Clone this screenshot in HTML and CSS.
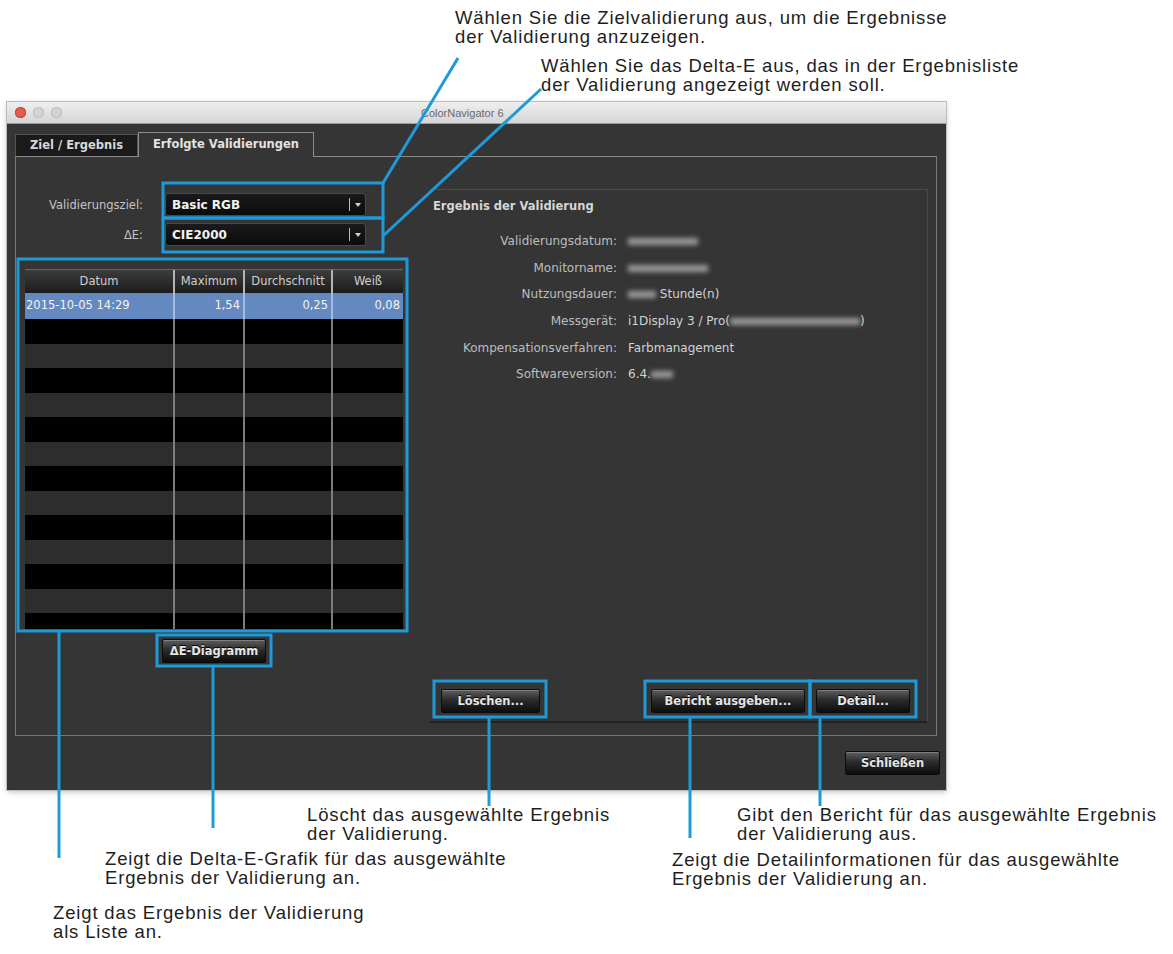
FILE: index.html
```html
<!DOCTYPE html>
<html lang="de">
<head>
  <meta charset="UTF-8">
  <title>ColorNavigator 6 – Erfolgte Validierungen</title>
  <link rel="stylesheet" href="styles.css">
</head>
<body>
<div class="sheet">

  <div class="window">
    <div class="titlebar">
      <span class="light red"></span>
      <span class="light"></span>
      <span class="light"></span>
      <span class="title">ColorNavigator 6</span>
    </div>

    <div class="win-body">
      <div class="tabs">
        <div class="tab">Ziel / Ergebnis</div>
        <div class="tab active">Erfolgte Validierungen</div>
      </div>

      <div class="panel">
        <div class="left">
          <div class="form">
            <label>Validierungsziel:</label>
            <div class="select"><span>Basic RGB</span><i></i></div>
            <label>ΔE:</label>
            <div class="select"><span>CIE2000</span><i></i></div>
          </div>

          <div class="grid">
            <div class="row head">
              <div>Datum</div><div>Maximum</div><div>Durchschnitt</div><div>Weiß</div>
            </div>
            <div class="row selected">
              <div class="date">2015-10-05 14:29</div><div>1,54</div><div>0,25</div><div>0,08</div>
            </div>
            <div class="row"><div></div><div></div><div></div><div></div></div>
            <div class="row"><div></div><div></div><div></div><div></div></div>
            <div class="row"><div></div><div></div><div></div><div></div></div>
            <div class="row"><div></div><div></div><div></div><div></div></div>
            <div class="row"><div></div><div></div><div></div><div></div></div>
            <div class="row"><div></div><div></div><div></div><div></div></div>
            <div class="row"><div></div><div></div><div></div><div></div></div>
            <div class="row"><div></div><div></div><div></div><div></div></div>
            <div class="row"><div></div><div></div><div></div><div></div></div>
            <div class="row"><div></div><div></div><div></div><div></div></div>
            <div class="row"><div></div><div></div><div></div><div></div></div>
            <div class="row"><div></div><div></div><div></div><div></div></div>
            <div class="row"><div></div><div></div><div></div><div></div></div>
          </div>

          <div class="diag-row">
            <button class="btn diag">ΔE-Diagramm</button>
          </div>
        </div>

        <div class="right">
          <div class="group">
            <h2>Ergebnis der Validierung</h2>
            <div class="info">
              <span class="key">Validierungsdatum:</span>
              <span class="val"><b class="hidden w70"></b></span>
              <span class="key">Monitorname:</span>
              <span class="val"><b class="hidden w80"></b></span>
              <span class="key">Nutzungsdauer:</span>
              <span class="val"><b class="hidden w28"></b> Stunde(n)</span>
              <span class="key">Messgerät:</span>
              <span class="val">i1Display 3 / Pro(<b class="hidden w130"></b>)</span>
              <span class="key">Kompensationsverfahren:</span>
              <span class="val">Farbmanagement</span>
              <span class="key">Softwareversion:</span>
              <span class="val">6.4.<b class="hidden w22"></b></span>
            </div>
            <div class="actions">
              <button class="btn delete">Löschen...</button>
              <span class="spacer"></span>
              <button class="btn report">Bericht ausgeben...</button>
              <button class="btn detail">Detail...</button>
            </div>
          </div>
        </div>
      </div>

      <div class="footer">
        <button class="btn close">Schließen</button>
      </div>
    </div>
  </div>

  <!-- callout frames and leader lines -->
  <svg class="callouts" width="1173" height="954" viewBox="0 0 1173 954">
    <g fill="none" stroke="#1d9ad7" stroke-width="3">
      <rect x="163" y="183" width="220" height="35"/>
      <rect x="163" y="218" width="220" height="34"/>
      <rect x="18" y="259" width="389" height="372"/>
      <rect x="157" y="635" width="114" height="31"/>
      <rect x="434" y="681" width="112" height="36"/>
      <rect x="645" y="681" width="165" height="36"/>
      <rect x="810" y="681" width="106" height="36"/>
      <path d="M458 58 L383 183"/>
      <path d="M541 89 L383 236"/>
      <path d="M59 631 V858"/>
      <path d="M213 666 V828"/>
      <path d="M489 717 V806"/>
      <path d="M690 717 V838"/>
      <path d="M820 717 V806"/>
    </g>
  </svg>

  <p class="note n-target">Wählen Sie die Zielvalidierung aus, um die Ergebnisse<br>der Validierung anzuzeigen.</p>
  <p class="note n-delta">Wählen Sie das Delta-E aus, das in der Ergebnisliste<br>der Validierung angezeigt werden soll.</p>
  <p class="note n-delete">Löscht das ausgewählte Ergebnis<br>der Validierung.</p>
  <p class="note n-report">Gibt den Bericht für das ausgewählte Ergebnis<br>der Validierung aus.</p>
  <p class="note n-diag">Zeigt die Delta-E-Grafik für das ausgewählte<br>Ergebnis der Validierung an.</p>
  <p class="note n-detail">Zeigt die Detailinformationen für das ausgewählte<br>Ergebnis der Validierung an.</p>
  <p class="note n-list">Zeigt das Ergebnis der Validierung<br>als Liste an.</p>

</div>
</body>
</html>
```

FILE: styles.css
```css
body {
  margin: 0;
  background: #fff;
  font-family: "DejaVu Sans", Verdana, sans-serif;
}

.sheet {
  position: relative;
  width: 1173px;
  height: 954px;
  overflow: hidden;
}

/* ---------- window ---------- */

.window {
  margin: 102px 0 0 7px;
  width: 939px;
  height: 688px;
  background: #353535;
  box-shadow: 0 0 0 1px #bdbdbd, 0 2px 6px rgba(0,0,0,0.25);
}

.titlebar {
  height: 21px;
  display: flex;
  align-items: center;
  gap: 7px;
  padding-left: 8px;
  background: linear-gradient(#efefef, #d5d5d5);
  border-bottom: 1px solid #9c9c9c;
}

.light {
  width: 11px;
  height: 11px;
  border-radius: 50%;
  background: #d4d4d4;
  box-shadow: inset 0 0 0 1px #bcbcbc;
}
.light.red {
  background: #e25c4f;
  box-shadow: inset 0 0 0 1px #c6463a;
}

.titlebar .title {
  margin-left: 352px;
  font-family: "Liberation Sans", Arial, sans-serif;
  font-size: 11px;
  color: #6a6a6a;
}

.win-body {
  padding: 8px 9px 0 8px;
}

/* ---------- tabs ---------- */

.tabs {
  display: flex;
  align-items: flex-end;
  height: 24px;
}

.tab {
  width: 123px;
  height: 22px;
  box-sizing: border-box;
  border: 1px solid #545454;
  border-bottom: none;
  background: #1a1a1a;
  color: #d8d8d8;
  font-size: 11.5px;
  font-weight: bold;
  line-height: 21px;
  text-align: center;
}

.tab.active {
  position: relative;
  z-index: 1;
  width: 176px;
  height: 25px;
  margin-bottom: -1px;
  border-color: #8c8c8c;
  background: #353535;
  color: #e2e2e2;
  line-height: 23px;
}

/* ---------- panel ---------- */

.panel {
  height: 580px;
  box-sizing: border-box;
  border: 1px solid #777;
  border-top-color: #8c8c8c;
  display: grid;
  grid-template-columns: 400px 1fr;
}

.left {
  padding-top: 36px;
}

.form {
  display: grid;
  grid-template-columns: 127px 201px;
  column-gap: 22px;
  row-gap: 7px;
  align-items: center;
}

.form label {
  text-align: right;
  font-size: 11.5px;
  color: #c4c4c4;
}

.select {
  height: 23px;
  box-sizing: border-box;
  border: 1px solid #4a4a4a;
  border-radius: 3px;
  background: linear-gradient(#1a1a1a, #0b0b0b);
  display: flex;
  align-items: center;
}
.select span {
  flex: 1;
  padding-left: 6px;
  font-size: 12px;
  font-weight: bold;
  color: #f2f2f2;
}
.select i {
  width: 15px;
  height: 13px;
  border-left: 1px solid #bdbdbd;
  position: relative;
}
.select i::after {
  content: "";
  position: absolute;
  left: 5px;
  top: 5px;
  border: 3px solid transparent;
  border-top: 4px solid #d0d0d0;
  border-bottom: none;
}

/* result list */

.grid {
  margin: 23px 0 0 9px;
  width: 378px;
  height: 360px;
  overflow: hidden;
  background: #000;
}

.row {
  display: grid;
  grid-template-columns: 150px 70px 88px 70px;
  height: 24.5px;
  font-size: 11.5px;
  color: #e6e6e6;
}
.row:nth-child(even) {
  background: #2d2d2d;
}
.row > div {
  border-right: 2px solid #7c7c7c;
  padding: 0 3px;
  line-height: 24px;
  text-align: right;
}
.row > div:last-child {
  border-right: none;
}
.row > .date {
  text-align: left;
  padding-left: 1px;
}

.row.head {
  height: 24px;
  background: linear-gradient(#3c3c3c, #1c1c1c);
  border-top: 1px solid #6c6553;
  box-sizing: border-box;
  color: #cfcfcf;
}
.row.head > div {
  text-align: center;
  line-height: 22px;
  border-right-color: #b4b4b4;
}

.row.selected {
  background: #6488c0;
  color: #f4f4f4;
  height: 26px;
}
.row.selected > div {
  border-right-color: #a7bcdc;
  line-height: 25px;
}

.diag-row {
  width: 378px;
  margin-left: 9px;
  padding-top: 10px;
  display: flex;
  justify-content: center;
}

/* ---------- buttons ---------- */

.btn {
  height: 24px;
  box-sizing: border-box;
  padding: 0;
  border: 1px solid #0c0c0c;
  border-radius: 2px;
  background: linear-gradient(#5e5e5e, #2b2b2b 45%, #0d0d0d);
  box-shadow: inset 0 1px 0 rgba(255,255,255,0.22);
  color: #e6e6e6;
  font-family: "DejaVu Sans", Verdana, sans-serif;
  font-size: 11.5px;
  font-weight: bold;
  text-shadow: 0 -1px 0 #000;
}

.btn.diag { width: 104px; }
.btn.delete { width: 99px; }
.btn.report { width: 154px; }
.btn.detail { width: 94px; }
.btn.close { width: 95px; }

/* ---------- result details ---------- */

.right {
  padding: 32px 8px 0 14px;
}

.group {
  height: 534px;
  box-sizing: border-box;
  border-top: 1px solid #4c4c4c;
  border-right: 1px solid #484848;
  border-bottom: 2px solid #222;
  display: flex;
  flex-direction: column;
}

.group h2 {
  margin: 9px 0 0 3px;
  font-size: 11.5px;
  font-weight: bold;
  color: #d6d6d6;
  line-height: 14px;
}

.info {
  margin-top: 15px;
  display: grid;
  grid-template-columns: 187px 1fr;
  column-gap: 11px;
  grid-auto-rows: 26.6px;
  align-items: center;
  font-size: 12px;
}
.info .key {
  text-align: right;
  color: #bdbdbd;
}
.info .val {
  color: #d2d2d2;
}

.hidden {
  display: inline-block;
  height: 7px;
  vertical-align: middle;
  background: #9a9a9a;
  filter: blur(2.5px);
}
.w22 { width: 22px; }
.w28 { width: 28px; }
.w70 { width: 70px; }
.w80 { width: 80px; }
.w130 { width: 130px; }

.actions {
  margin-top: auto;
  display: flex;
  gap: 11px;
  padding: 0 17px 8px 11px;
}
.actions .spacer {
  flex: 1;
}

.footer {
  display: flex;
  justify-content: flex-end;
  padding-top: 15px;
  margin-right: -3px;
}

/* ---------- callouts ---------- */

.callouts {
  position: absolute;
  left: 0;
  top: 0;
}

.note {
  position: absolute;
  margin: 0;
  font-family: "Liberation Sans", Arial, sans-serif;
  font-size: 18.5px;
  letter-spacing: 0.85px;
  line-height: 19px;
  color: #1e1e1e;
  white-space: nowrap;
}

.n-target { left: 455px; top: 8px; }
.n-delta { left: 541px; top: 56px; }
.n-delete { left: 307px; top: 805px; }
.n-report { left: 737px; top: 805px; }
.n-diag { left: 105px; top: 849px; }
.n-detail { left: 672px; top: 850px; }
.n-list { left: 53px; top: 903px; }
```
